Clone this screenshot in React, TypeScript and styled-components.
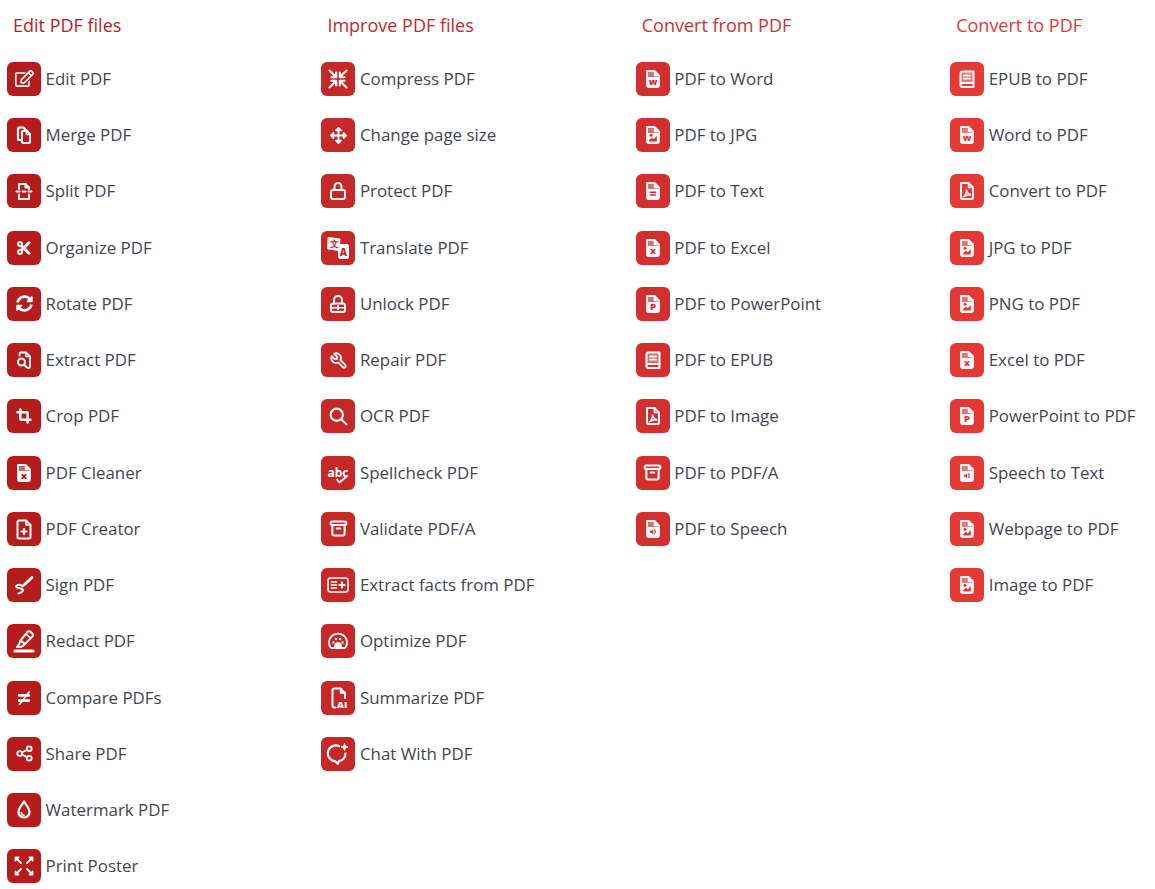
import { ReactNode } from 'react';
import styled, { createGlobalStyle } from 'styled-components';
import { TbShare, TbTool, TbSearch, TbArchive, TbCrop } from 'react-icons/tb';
import { FaArrowsAlt, FaCut, FaNotEqual, FaRegEdit, FaSyncAlt } from 'react-icons/fa';

const GlobalStyle = createGlobalStyle`
    html, body {
        margin: 0;
        padding: 0;
        background: #ffffff;
        overflow: hidden;
    }
`;

const Page = styled.div`
    display: grid;
    grid-template-columns: repeat(3, 314.4px) 1fr;
    padding: 12px 0 0 7px;
    width: 1155px;
    height: 889px;
    box-sizing: border-box;
    font-family: 'Open Sans', 'Liberation Sans', sans-serif;
`;

const Column = styled.section`
    display: flex;
    flex-direction: column;
`;

const Heading = styled.h2<{ $color: string }>`
    margin: 0 0 23.93px 6px;
    height: 26px;
    font-size: 18px;
    line-height: 26px;
    font-weight: 400;
    color: ${(props) => props.$color};
`;

const ToolList = styled.div`
    display: flex;
    flex-direction: column;
    gap: 22.25px;
`;

const Row = styled.div`
    display: flex;
    align-items: center;
    gap: 4.5px;
    height: 34px;
`;

const Tile = styled.span<{ $color: string }>`
    --tile: ${(props) => props.$color};
    flex: none;
    display: flex;
    align-items: center;
    justify-content: center;
    width: 34px;
    height: 34px;
    border-radius: 6px;
    color: #ffffff;
    background: var(--tile);
`;

const Label = styled.span`
    font-size: 16.9px;
    line-height: 24px;
    color: #3f4652;
    white-space: nowrap;
`;

const Glyph = styled.svg`
    display: block;
    width: 24px;
    height: 24px;
    fill: none;
    stroke: currentColor;
    stroke-width: 2;
    stroke-linecap: round;
    stroke-linejoin: round;
`;

const Small = styled.text<{ $weight?: number }>`
    font-family: 'Open Sans', sans-serif;
    font-weight: ${(props) => props.$weight ?? 800};
    stroke: none;
`;

const Line = ({ children }: { children: ReactNode }) => (
    <Glyph viewBox="0 0 24 24">{children}</Glyph>
);

// the file shape used by all convert tools, with a small mark in the lower part
const FileShape = ({ children }: { children?: ReactNode }) => (
    <Line>
        <path
            d="M6 4h7.500L18 8.500v10a1.500 1.500 0 0 1-1.500 1.500h-9A1.500 1.500 0 0 1 6 18.500z"
            fill="currentColor"
            fillOpacity="0.3"
            strokeWidth="1.800"
        />
        <path d="M13.500 4v4.500H18" fill="currentColor" strokeWidth="1.400" />
        <rect x="7" y="10" width="10" height="9" fill="currentColor" stroke="none" />
        {children}
    </Line>
);

const FileLetter = ({ letter }: { letter: string }) => (
    <FileShape>
        <Small x="12" y="18" textAnchor="middle" fontSize="9.500" fill="var(--tile)">
            {letter}
        </Small>
    </FileShape>
);

const FileImage = () => (
    <FileShape>
        <circle cx="10" cy="12.300" r="1.500" fill="var(--tile)" stroke="none" />
        <path d="M8.200 18.500V17l2.800-2.200 1.800 1.400 3-3.200v5.500z" fill="var(--tile)" stroke="none" />
    </FileShape>
);

const FileText = () => (
    <FileShape>
        <path d="M9.300 13.200h5.400M9.300 16h5.400" stroke="var(--tile)" strokeWidth="1.500" />
    </FileShape>
);

const FileAcrobat = () => (
    <Line>
        <path d="M6 4h7.500L18 8.500v10a1.500 1.500 0 0 1-1.500 1.500h-9A1.500 1.500 0 0 1 6 18.500z" strokeWidth="2" />
        <path d="M13.500 4v4.500H18" strokeWidth="1.600" />
        <path d="M8.300 17.800c2.200-1 3.300-4.600 3.100-6.800c1 3.200 2.500 4.300 4.400 4.800c-2.500-.2-5.100.4-7.500 2z" strokeWidth="1.400" />
    </Line>
);

const FileSound = () => (
    <FileShape>
        <path d="M8.800 13.700h1.500l1.700-1.500v5l-1.700-1.500H8.800z" fill="var(--tile)" stroke="none" />
        <path d="M13.500 13a2.400 2.400 0 0 1 0 3.400" stroke="var(--tile)" strokeWidth="1.200" />
    </FileShape>
);

const Book = () => (
    <Line>
        <path d="M5.500 6.500A2 2 0 0 1 7.500 4.500h11v11.500h-11a2 2 0 0 0-2 2z" fill="currentColor" fillOpacity="0.3" />
        <path d="M5.500 18a2 2 0 0 0 2 2h11v-4" />
        <path d="M9 8.500h6M9 11.700h6" strokeWidth="1.800" />
    </Line>
);

const Merge = () => (
    <Line>
        <path d="M7.500 4.500h4l3 3" strokeWidth="2.200" />
        <path d="M7.500 4.500A1.500 1.500 0 0 0 6 6v9.500A1.500 1.500 0 0 0 7.500 17H9" strokeWidth="2.200" />
        <path d="M10.500 8h4.500l3 3v7.500a1.500 1.500 0 0 1-1.500 1.500h-5A1.500 1.500 0 0 1 10 18.500v-10z" strokeWidth="2" />
        <path d="M14.500 8v3.500H18" strokeWidth="1.500" />
    </Line>
);

const Split = () => (
    <Line>
        <path d="M7 10V5h6.500L17 8.500V10" />
        <path d="M13.500 5v3.500H17" fill="currentColor" />
        <path d="M4.500 12.500h3M10.500 12.500h3M16.500 12.500h3" />
        <path d="M7 15.500V20h10v-4.500" />
    </Line>
);

const ExtractIcon = () => (
    <Line>
        <path d="M7.500 7.500v-2a1 1 0 0 1 1-1h5.500l4 4v10a1.500 1.500 0 0 1-1.500 1.500h-.500" strokeWidth="1.800" />
        <path d="M14 4.500v4h4" strokeWidth="1.500" />
        <circle cx="9.500" cy="14" r="3.500" />
        <path d="M12.200 16.700l2.800 2.800" />
    </Line>
);

const Creator = () => (
    <Line>
        <path d="M5.500 5A1.500 1.500 0 0 1 7 3.500h7l4.500 4.500v12A1.500 1.500 0 0 1 17 21.500H7A1.500 1.500 0 0 1 5.500 20z" />
        <path d="M14 3.500V8h4.500" strokeWidth="1.600" />
        <path d="M12 12v5M9.500 14.500h5" strokeWidth="2.200" />
    </Line>
);

const Sign = () => (
    <Line>
        <path d="M12.500 11.500L20 4.500" strokeWidth="2.800" />
        <path d="M10.500 13.500l1.200-1.200" strokeWidth="2" />
        <path d="M10 12.500c-3-1.500-6-.5-6 1c0 2 7 1.500 7 3.500c0 1.500-3 3-4.500 3.500" strokeWidth="2" />
    </Line>
);

const Redact = () => (
    <Line>
        <path d="M8.500 11.500L15.500 2.800a1.800 1.800 0 0 1 2.600-.2l2.400 2.200a1.800 1.800 0 0 1 .1 2.600L13 15z" />
        <path d="M14 5l4.500 4" strokeWidth="1.600" />
        <path d="M8.500 11.500L7.200 15l-2.200 3h4l2-1.400L13 15" />
        <path d="M3 22h18" strokeWidth="3" />
    </Line>
);

const Droplet = () => (
    <Line>
        <path d="M12 3.500c3 4.500 5.500 7.200 5.500 10.500a5.500 5.500 0 0 1-11 0c0-3.300 2.500-6 5.500-10.500z" strokeWidth="2.200" />
        <path d="M9.500 14.500a2.800 2.800 0 0 0 2.500 2.800" strokeWidth="1.600" />
    </Line>
);

const Poster = () => (
    <Line>
        <path d="M3.500 6.500v-3h3M4 4l5 5" strokeWidth="1.800" />
        <path d="M17.500 3.500h3v3M20 4l-5 5" strokeWidth="1.800" />
        <path d="M3.500 17.500v3h3M4 20l5-5" strokeWidth="1.800" />
        <path d="M17.500 20.500h3v-3M20 20l-5-5" strokeWidth="1.800" />
    </Line>
);

const Compress = () => (
    <Line>
        <path d="M3.500 3.500l6 6M10.200 5.500v4.700H5.500" strokeWidth="2.100" />
        <path d="M20.500 3.500l-6 6M13.800 5.500v4.700h4.700" strokeWidth="2.100" />
        <path d="M3.500 20.500l6-6M10.200 18.500v-4.700H5.500" strokeWidth="2.100" />
        <path d="M20.500 20.500l-6-6M13.800 18.500v-4.700h4.700" strokeWidth="2.100" />
    </Line>
);

const Lock = () => (
    <Line>
        <rect x="5" y="11" width="14" height="9" rx="2" />
        <path d="M8.500 11V7.500a3.500 3.500 0 0 1 7 0V11" />
    </Line>
);

const Unlock = () => (
    <Line>
        <rect x="5" y="11.500" width="14" height="8.500" rx="2" />
        <path d="M8 11.500V8a4 4 0 0 1 8 0v3.500" />
        <path d="M5 15.700h14" strokeWidth="1.400" />
        <path d="M12 14v3.500" />
    </Line>
);

const Translate = () => (
    <Line>
        <path d="M2.500 1.500l11.500 1.500-1 11.500L2 13z" fill="currentColor" strokeWidth="1" />
        <path d="M13 8.500h8a1.500 1.500 0 0 1 1.500 1.500v11a1.500 1.500 0 0 1-1.500 1.500h-7a1.500 1.500 0 0 1-1.500-1.500z" fill="currentColor" strokeWidth="1" />
        <Small x="8" y="11" textAnchor="middle" fontSize="8.500" fill="var(--tile)">
            文
        </Small>
        <Small x="17.500" y="20" textAnchor="middle" fontSize="10" fill="var(--tile)">
            A
        </Small>
    </Line>
);

const Spell = () => (
    <Line>
        <Small x="12" y="15.500" textAnchor="middle" fontSize="12" fill="currentColor" $weight={700}>
            abc
        </Small>
        <path d="M11 18.500l2.500 3 7-6" strokeWidth="1.900" />
    </Line>
);

const Facts = () => (
    <Line>
        <rect x="2" y="5" width="20" height="14" rx="2.500" strokeWidth="1.600" />
        <path d="M5.500 9h5M5.500 12h5M5.500 15h5" strokeWidth="1.600" />
        <path d="M16 9.500v5M13.500 12h5" strokeWidth="2.200" />
    </Line>
);

const Gauge = () => (
    <Line>
        <path d="M4.500 18.500a9 9 0 1 1 15 0a1.500 1.500 0 0 1-1.200.500H5.700a1.500 1.500 0 0 1-1.200-.500z" strokeWidth="1.800" />
        <path d="M7.500 13.500h.01M10 10h.01M14 10h.01M16.500 13.500h.01" strokeWidth="2.400" />
        <path d="M8.500 17a3.500 3.500 0 0 1 7 0z" fill="currentColor" strokeWidth="1" />
    </Line>
);

const Summarize = () => (
    <Line>
        <path d="M9.500 21.500h-1a2 2 0 0 1-2-2v-15a2 2 0 0 1 2-2h6l4.500 4.500v5" />
        <path d="M14.500 2.500V7H19" fill="currentColor" strokeWidth="1.400" />
        <Small x="11" y="21.500" fontSize="9.500" fill="currentColor">
            AI
        </Small>
    </Line>
);

const Chat = () => (
    <Line>
        <path d="M13 4a8 8 0 1 0-4 15.300l3 2.200l.800-2.300a8 8 0 0 0 6.700-7.700" strokeWidth="2.200" />
        <path d="M18.500 1.500c.300 2.300 1.200 3.200 3.500 3.500c-2.300.300-3.200 1.200-3.500 3.500c-.300-2.300-1.200-3.200-3.500-3.500c2.300-.300 3.200-1.200 3.500-3.500z" fill="currentColor" strokeWidth="1" />
    </Line>
);

type Tool = { name: string; icon: ReactNode };

const tb = { size: 21, strokeWidth: 2.400 };

const groups: { title: string; color: string; tools: Tool[] }[] = [
    {
        title: 'Edit PDF files',
        color: '#b71c1c',
        tools: [
            { name: 'Edit PDF', icon: <FaRegEdit size={19} /> },
            { name: 'Merge PDF', icon: <Merge /> },
            { name: 'Split PDF', icon: <Split /> },
            { name: 'Organize PDF', icon: <FaCut size={16} /> },
            { name: 'Rotate PDF', icon: <FaSyncAlt size={17} /> },
            { name: 'Extract PDF', icon: <ExtractIcon /> },
            { name: 'Crop PDF', icon: <TbCrop size={22} strokeWidth={2.800} /> },
            { name: 'PDF Cleaner', icon: <FileLetter letter="x" /> },
            { name: 'PDF Creator', icon: <Creator /> },
            { name: 'Sign PDF', icon: <Sign /> },
            { name: 'Redact PDF', icon: <Redact /> },
            { name: 'Compare PDFs', icon: <FaNotEqual size={14} /> },
            { name: 'Share PDF', icon: <TbShare size={19} strokeWidth={2.400} /> },
            { name: 'Watermark PDF', icon: <Droplet /> },
            { name: 'Print Poster', icon: <Poster /> },
        ],
    },
    {
        title: 'Improve PDF files',
        color: '#c62828',
        tools: [
            { name: 'Compress PDF', icon: <Compress /> },
            { name: 'Change page size', icon: <FaArrowsAlt size={17} /> },
            { name: 'Protect PDF', icon: <Lock /> },
            { name: 'Translate PDF', icon: <Translate /> },
            { name: 'Unlock PDF', icon: <Unlock /> },
            { name: 'Repair PDF', icon: <TbTool size={19} strokeWidth={2.300} /> },
            { name: 'OCR PDF', icon: <TbSearch {...tb} /> },
            { name: 'Spellcheck PDF', icon: <Spell /> },
            { name: 'Validate PDF/A', icon: <TbArchive {...tb} /> },
            { name: 'Extract facts from PDF', icon: <Facts /> },
            { name: 'Optimize PDF', icon: <Gauge /> },
            { name: 'Summarize PDF', icon: <Summarize /> },
            { name: 'Chat With PDF', icon: <Chat /> },
        ],
    },
    {
        title: 'Convert from PDF',
        color: '#d32f2f',
        tools: [
            { name: 'PDF to Word', icon: <FileLetter letter="w" /> },
            { name: 'PDF to JPG', icon: <FileImage /> },
            { name: 'PDF to Text', icon: <FileText /> },
            { name: 'PDF to Excel', icon: <FileLetter letter="x" /> },
            { name: 'PDF to PowerPoint', icon: <FileLetter letter="P" /> },
            { name: 'PDF to EPUB', icon: <Book /> },
            { name: 'PDF to Image', icon: <FileAcrobat /> },
            { name: 'PDF to PDF/A', icon: <TbArchive {...tb} /> },
            { name: 'PDF to Speech', icon: <FileSound /> },
        ],
    },
    {
        title: 'Convert to PDF',
        color: '#e53935',
        tools: [
            { name: 'EPUB to PDF', icon: <Book /> },
            { name: 'Word to PDF', icon: <FileLetter letter="w" /> },
            { name: 'Convert to PDF', icon: <FileAcrobat /> },
            { name: 'JPG to PDF', icon: <FileImage /> },
            { name: 'PNG to PDF', icon: <FileImage /> },
            { name: 'Excel to PDF', icon: <FileLetter letter="x" /> },
            { name: 'PowerPoint to PDF', icon: <FileLetter letter="P" /> },
            { name: 'Speech to Text', icon: <FileSound /> },
            { name: 'Webpage to PDF', icon: <FileImage /> },
            { name: 'Image to PDF', icon: <FileImage /> },
        ],
    },
];

export default function App() {
    return (
        <>
            <GlobalStyle />
            <Page>
                {groups.map((group) => (
                    <Column key={group.title}>
                        <Heading $color={group.color}>{group.title}</Heading>
                        <ToolList>
                            {group.tools.map((tool) => (
                                <Row key={tool.name}>
                                    <Tile $color={group.color}>{tool.icon}</Tile>
                                    <Label>{tool.name}</Label>
                                </Row>
                            ))}
                        </ToolList>
                    </Column>
                ))}
            </Page>
        </>
    );
}
